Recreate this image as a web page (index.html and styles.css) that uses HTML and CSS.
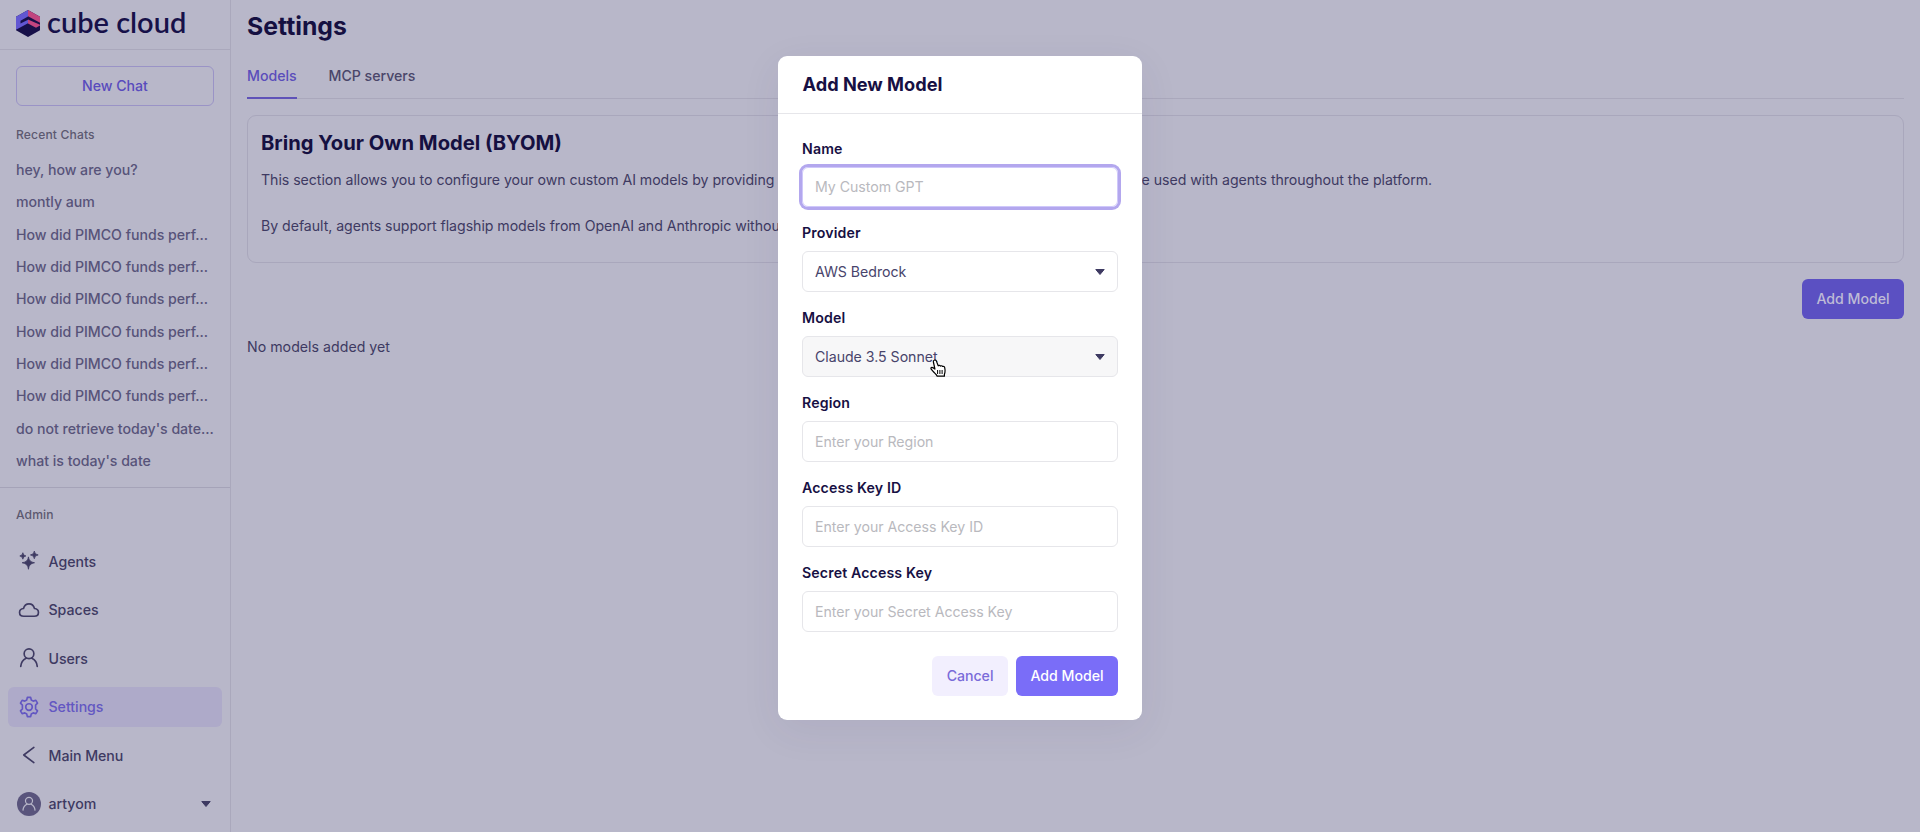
FILE: index.html
```html
<!DOCTYPE html>
<html lang="en">
<head>
<meta charset="utf-8">
<title>Settings</title>
<link rel="stylesheet" href="styles.css">
</head>
<body>
<div class="app">
  <aside class="sidebar">
    <div class="brand">
      <svg class="brand-mark" width="24" height="27" viewBox="0 0 24 27">
        <path d="M12 0 0 6.800v13.400L12 27l12-6.800V6.800z" fill="#171049"/>
        <path d="M12 0 0 6.800v13l12-6.600V9.800l-7.500 3.700v-2.700L12 6.500z" fill="#6257d2"/>
        <path d="M12 0v6.200l12 6.500V6.800z" fill="#c2457f"/>
        <path d="M12 9.400v4l8 4.400 4-2.200v-.8z" fill="#c2457f"/>
      </svg>
      <span class="brand-name">cube cloud</span>
    </div>
    <div class="chats">
      <button class="new-chat">New Chat</button>
      <h2 class="group-title">Recent Chats</h2>
      <ul class="chat-list">
        <li>hey, how are you?</li>
        <li>montly aum</li>
        <li>How did PIMCO funds perf...</li>
        <li>How did PIMCO funds perf...</li>
        <li>How did PIMCO funds perf...</li>
        <li>How did PIMCO funds perf...</li>
        <li>How did PIMCO funds perf...</li>
        <li>How did PIMCO funds perf...</li>
        <li>do not retrieve today's date...</li>
        <li>what is today's date</li>
      </ul>
    </div>
    <nav class="admin">
      <h2 class="group-title">Admin</h2>
      <a class="nav-item">
        <svg class="icon" viewBox="0 0 24 24" fill="currentColor"><path d="M11.400 7.500Q11.800 13.100 18 13.900 11.800 14.700 11.400 21 11 14.700 4.500 13.900 11 13.100 11.400 7.500zM17.800 1.200Q18 5 22 5.400 18 5.800 17.800 9.500 17.600 5.800 13.600 5.400 17.600 5 17.800 1.200zM5.300 3Q5.500 6.100 8.600 6.500 5.500 6.900 5.300 10 5.100 6.900 2 6.500 5.100 6.100 5.300 3z" stroke="currentColor" stroke-width=".9"/></svg>
        Agents
      </a>
      <a class="nav-item">
        <svg class="icon line" viewBox="0 0 24 24"><path d="M6.300 18.800h11.400c2.700 0 4.600-1.800 4.600-4.100 0-2.400-1.800-4.100-4.300-4.300C17.200 7.400 15 5.300 12 5.300S6.800 7.400 6 10.400c-2.500.2-4.300 1.900-4.300 4.300 0 2.300 1.900 4.100 4.600 4.100z"/></svg>
        Spaces
      </a>
      <a class="nav-item">
        <svg class="icon line" viewBox="0 0 24 24"><circle cx="12" cy="7.300" r="5.300"/><path d="M3 21.200c.3-4.200 2.600-7.300 5.900-8.900M21 21.200c-.3-4.200-2.600-7.300-5.900-8.900"/></svg>
        Users
      </a>
      <a class="nav-item active">
        <svg class="icon line" viewBox="0 0 24 24"><circle cx="12" cy="12" r="3.600"/><path d="M10.200 1.500h3.600l.7 2.900 2.100 1.200 2.900-.9 1.800 3.100-2.100 2.100v4.200l2.100 2.100-1.800 3.100-2.900-.9-2.100 1.200-.7 2.900h-3.600l-.7-2.900-2.100-1.200-2.900.9-1.800-3.100 2.100-2.100V9.900L2.700 7.800l1.800-3.100 2.900.9 2.100-1.200z"/></svg>
        Settings
      </a>
      <a class="nav-item">
        <svg class="icon line" viewBox="0 0 24 24"><path d="M17.300 3.700 6.300 12l11 8.300"/></svg>
        Main Menu
      </a>
      <a class="nav-item">
        <span class="avatar"><svg class="icon line" viewBox="0 0 24 24"><circle cx="12" cy="7.300" r="5.300"/><path d="M3 21.200c.3-4.200 2.600-7.300 5.900-8.900M21 21.200c-.3-4.200-2.600-7.300-5.900-8.900"/></svg></span>
        artyom
        <svg class="caret" width="10" height="6" viewBox="0 0 10 6"><path d="M.8.500h8.400L5 5.500z"/></svg>
      </a>
    </nav>
  </aside>
  <main class="main">
    <h1 class="page-title">Settings</h1>
    <div class="tabs">
      <span class="tab selected">Models</span>
      <span class="tab">MCP servers</span>
    </div>
    <section class="card">
      <h2 class="card-title">Bring Your Own Model (BYOM)</h2>
      <p class="card-text"><span class="lead">This section allows you to configure your own custom AI models by providing</span><span class="rest">be used with agents throughout the platform.</span></p>
      <p class="card-text">By default, agents support flagship models from OpenAI and Anthropic without extra setup.</p>
    </section>
    <div class="actions"><button class="btn dimmed">Add Model</button></div>
    <p class="empty">No models added yet</p>
  </main>
</div>

<div class="overlay">
  <div class="modal">
    <h2 class="modal-title">Add New Model</h2>
    <form class="form">
      <div class="field"><label>Name</label><div class="control focused placeholder">My Custom GPT</div></div>
      <div class="field"><label>Provider</label><div class="control">AWS Bedrock<svg class="caret" width="10" height="6" viewBox="0 0 10 6"><path d="M.8.500h8.400L5 5.500z"/></svg></div></div>
      <div class="field"><label>Model</label><div class="control hovered">Claude 3.5 Sonnet<svg class="caret" width="10" height="6" viewBox="0 0 10 6"><path d="M.8.500h8.400L5 5.500z"/></svg>
        <svg class="pointer" width="17" height="19" viewBox="0 0 17 19"><path d="M4.200 1.200c.9-.5 1.900 0 2.200.9l1.800 4.700c.5-.6 1.800-.5 2.200.3.600-.6 1.700-.4 2.100.4.900-.4 2 .1 2.200 1.100.5 2.400.6 4.500-.3 6.700v1.900H7.200c-.6-1.600-2.600-3-4.300-5C1.700 10.800.4 9.700 1 8.900c.7-.9 2.300-.4 3.900 1.100L3.400 3c-.2-.9.100-1.500.8-1.800z" fill="#fff" stroke="#000" stroke-width="1.200" stroke-linejoin="round"/><path d="M7.600 11v4M9.900 11v4M12.100 11v4" stroke="#000" stroke-width="1"/></svg>
      </div></div>
      <div class="field"><label>Region</label><div class="control placeholder">Enter your Region</div></div>
      <div class="field"><label>Access Key ID</label><div class="control placeholder">Enter your Access Key ID</div></div>
      <div class="field"><label>Secret Access Key</label><div class="control placeholder">Enter your Secret Access Key</div></div>
      <div class="buttons"><button type="button" class="btn secondary">Cancel</button><button type="button" class="btn">Add Model</button></div>
    </form>
  </div>
</div>
</body>
</html>
```

FILE: styles.css
```css
* { box-sizing: border-box; margin: 0; padding: 0; }
body {
  width: 1920px; height: 832px; overflow: hidden;
  background: #b8b7c9; color: #3e3a62;
  font: 400 14.15px/23.3px Inter, sans-serif;
  letter-spacing: -.02px;
}
button { font: inherit; letter-spacing: inherit; border: 0; }
ul { list-style: none; }

.app { display: flex; height: 832px; }
.sidebar { width: 231px; flex: none; border-right: 1px solid #aaa8bc; display: flex; flex-direction: column; }
.brand { height: 50px; padding: 0 0 2px 16px; display: flex; align-items: center; gap: 7px; border-bottom: 1px solid #aaa8bc; }
.brand-mark { flex: none; }
.brand-name { padding-bottom: 2px; font: 600 29px/32px Lato, sans-serif; letter-spacing: 0; color: #171149; white-space: nowrap; }
.chats { height: 438px; padding: 16px 16px 0; border-bottom: 1px solid #a5a3b8; }
.new-chat { display: block; width: 198px; height: 40px; border: 1px solid #9a93c6; border-radius: 6px; background: none; color: #584bbd; font-weight: 500; }
.group-title { font-size: 12.100px; line-height: 20px; font-weight: 500; letter-spacing: .14px; color: #5c5970; }
.chats .group-title { margin-top: 19.500px; margin-bottom: 8.500px; }
.chat-list li { height: 32.340px; line-height: 32.340px; font-weight: 500; color: #575379; white-space: nowrap; }
.admin { padding: 17px 8px 0; display: flex; flex-direction: column; }
.admin .group-title { padding-left: 8px; margin-bottom: 16.400px; }
.nav-item { height: 40.500px; margin-bottom: 8px; padding: 0 11px 0 10px; border-radius: 6px; display: flex; align-items: center; gap: 8.500px; font-weight: 500; color: #3e3a62; }
.nav-item.active { background: #aeaac9; color: #6357c2; }
.icon { width: 22px; height: 22px; flex: none; }
.line { fill: none; stroke: currentColor; stroke-width: 1.800; stroke-linecap: round; stroke-linejoin: round; }
.avatar { width: 24px; height: 24px; margin: 0 -1px; border-radius: 50%; background: #59547c; color: #b8b7c9; display: flex; align-items: center; justify-content: center; }
.avatar .icon { width: 16px; height: 16px; }
.caret { margin-left: auto; fill: #3e3a62; stroke: #3e3a62; stroke-linejoin: round; flex: none; }

.main { flex: 1; padding: 0 16px; }
.page-title { margin-top: 10px; font-size: 24.750px; line-height: 32px; font-weight: 700; letter-spacing: 0; color: #151041; }
.tabs { margin-top: 12px; height: 45px; display: flex; gap: 32px; border-bottom: 1px solid #aaa8bc; }
.tab { height: 45px; line-height: 44px; font-weight: 500; color: #4a4669; }
.tab.selected { color: #5a4dbb; border-bottom: 2px solid #5f52b8; }
.card { margin-top: 16px; height: 148px; padding: 13.500px 13px; border: 1px solid #a9a7bc; border-radius: 9px; }
.card-title { font-size: 20.200px; line-height: 26px; font-weight: 700; letter-spacing: 0; color: #151041; margin-bottom: 12px; }
.card-text { display: flex; white-space: nowrap; margin-bottom: 23.300px; letter-spacing: -.04px; }
.lead { width: 872px; }
.actions { margin-top: 16px; display: flex; justify-content: flex-end; }
.btn { height: 40px; padding: 0 14.500px; border-radius: 6px; background: #7a6df8; color: #fff; font-weight: 500; }
.btn.dimmed { background: #5b50c2; color: #bebbd6; }
.btn.secondary { background: #f2effe; color: #7a6bd9; }
.empty { margin-top: 16px; letter-spacing: 0.03px; }

.overlay { position: absolute; inset: 0; padding-top: 56px; display: flex; justify-content: center; align-items: flex-start; }
.modal { width: 364px; height: 664px; background: #fff; border-radius: 9px; box-shadow: 0 10px 40px rgba(50, 40, 100, .07); }
.modal-title { height: 58px; padding-left: 24.500px; font-size: 18.200px; line-height: 57px; font-weight: 700; letter-spacing: 0; color: #171043; border-bottom: 1px solid #e6e6ea; }
.form { padding: 24.500px 24px 0; display: flex; flex-direction: column; }
.field { height: 84.950px; }
.field label { display: block; height: 28px; line-height: 20px; font-weight: 600; letter-spacing: .14px; color: #171043; }
.control { position: relative; height: 40.500px; padding: 0 12px; border: 1px solid #e6e6ea; border-radius: 6px; display: flex; align-items: center; color: #48446b; }
.placeholder { color: #b9b9be; }
.control.focused { border-color: #cfc8fa; box-shadow: 0 0 0 3px #b3a7ee; }
.control.hovered { background: #f7f7f8; }
.pointer { position: absolute; left: 127px; top: 22px; }
.buttons { display: flex; justify-content: flex-end; gap: 8px; margin-top: 8px; }
```
